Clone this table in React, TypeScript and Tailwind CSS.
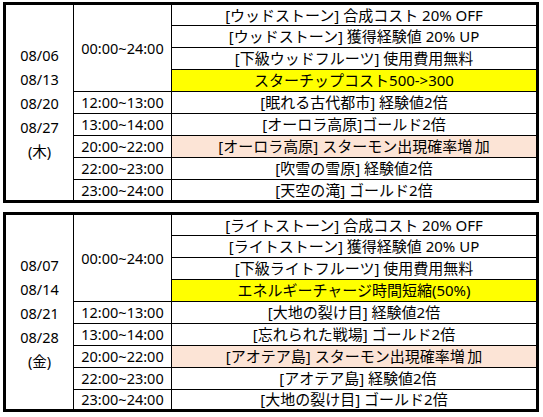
const font = {
  fontFamily: '"Noto Sans", "Noto Sans CJK JP", sans-serif',
};

type Row = { text: string; bg?: "yellow" | "peach" };

type Block = {
  dates: string[];
  day: string;
  rows: Row[];
  last: string;
};

const blocks: Block[] = [
  {
    dates: ["08/06", "08/13", "08/20", "08/27"],
    day: "(木)",
    last: "grid-rows-[20px_repeat(7,22px)_21px]",
    rows: [
      { text: "[ウッドストーン] 合成コスト 20% OFF" },
      { text: "[ウッドストーン] 獲得経験値 20% UP" },
      { text: "[下級ウッドフルーツ] 使用費用無料" },
      { text: "スターチップコスト500->300", bg: "yellow" },
      { text: "[眠れる古代都市] 経験値2倍" },
      { text: "[オーロラ高原]ゴールド2倍" },
      { text: "[オーロラ高原] スターモン出現確率増\u2006加", bg: "peach" },
      { text: "[吹雪の雪原] 経験値2倍" },
      { text: "[天空の滝] ゴールド2倍" },
    ],
  },
  {
    dates: ["08/07", "08/14", "08/21", "08/28"],
    day: "(金)",
    last: "grid-rows-[20px_repeat(7,22px)_20px]",
    rows: [
      { text: "[ライトストーン] 合成コスト 20% OFF" },
      { text: "[ライトストーン] 獲得経験値 20% UP" },
      { text: "[下級ライトフルーツ] 使用費用無料" },
      { text: "エネルギーチャージ時間短縮(50%)", bg: "yellow" },
      { text: "[大地の裂け目] 経験値2倍" },
      { text: "[忘れられた戦場] ゴールド2倍" },
      { text: "[アオテア島] スターモン出現確率増\u2006加", bg: "peach" },
      { text: "  [アオテア島] 経験値2倍" },
      { text: "[大地の裂け目] ゴールド2倍" },
    ],
  },
];

const times = [
  "12:00~13:00",
  "13:00~14:00",
  "20:00~22:00",
  "22:00~23:00",
  "23:00~24:00",
];

function Schedule({ block }: { block: Block }) {
  return (
    <div
      className={`grid w-[536px] grid-cols-[67px_1px_97px_1px_364px] ${block.last} border-[3px] border-black text-[14.5px] leading-none text-black`}
      style={font}
    >
      <div className="row-span-9 flex flex-col items-center justify-center gap-[9.5px] pt-[2px]">
        {block.dates.map((d) => (
          <span key={d}>{d}</span>
        ))}
        <span>{block.day}</span>
      </div>
      <div className="row-span-9 bg-black" />
      <div className="row-span-4 flex items-center justify-center">00:00~24:00</div>
      <div className="row-span-9 bg-black" />
      <div className="row-span-9 col-start-5 row-start-1 grid grid-rows-subgrid text-[15px]">
        {block.rows.map((r, i) => (
          <div
            key={i}
            className={`flex items-center justify-center whitespace-pre ${
              i > 0 ? "border-t border-black" : ""
            } ${r.bg === "yellow" ? "bg-[#ffff00]" : ""} ${
              r.bg === "peach" ? "bg-[#fce4d6]" : ""
            }`}
          >
            {r.text}
          </div>
        ))}
      </div>
      {times.map((t) => (
        <div
          key={t}
          className="col-start-3 flex items-center justify-center border-t border-black"
        >
          {t}
        </div>
      ))}
    </div>
  );
}

export default function App() {
  return (
    <div className="flex h-[417px] w-[543px] flex-col gap-[9px] bg-white pl-[3px] pt-[2px]">
      {blocks.map((b) => (
        <Schedule key={b.day} block={b} />
      ))}
    </div>
  );
}
